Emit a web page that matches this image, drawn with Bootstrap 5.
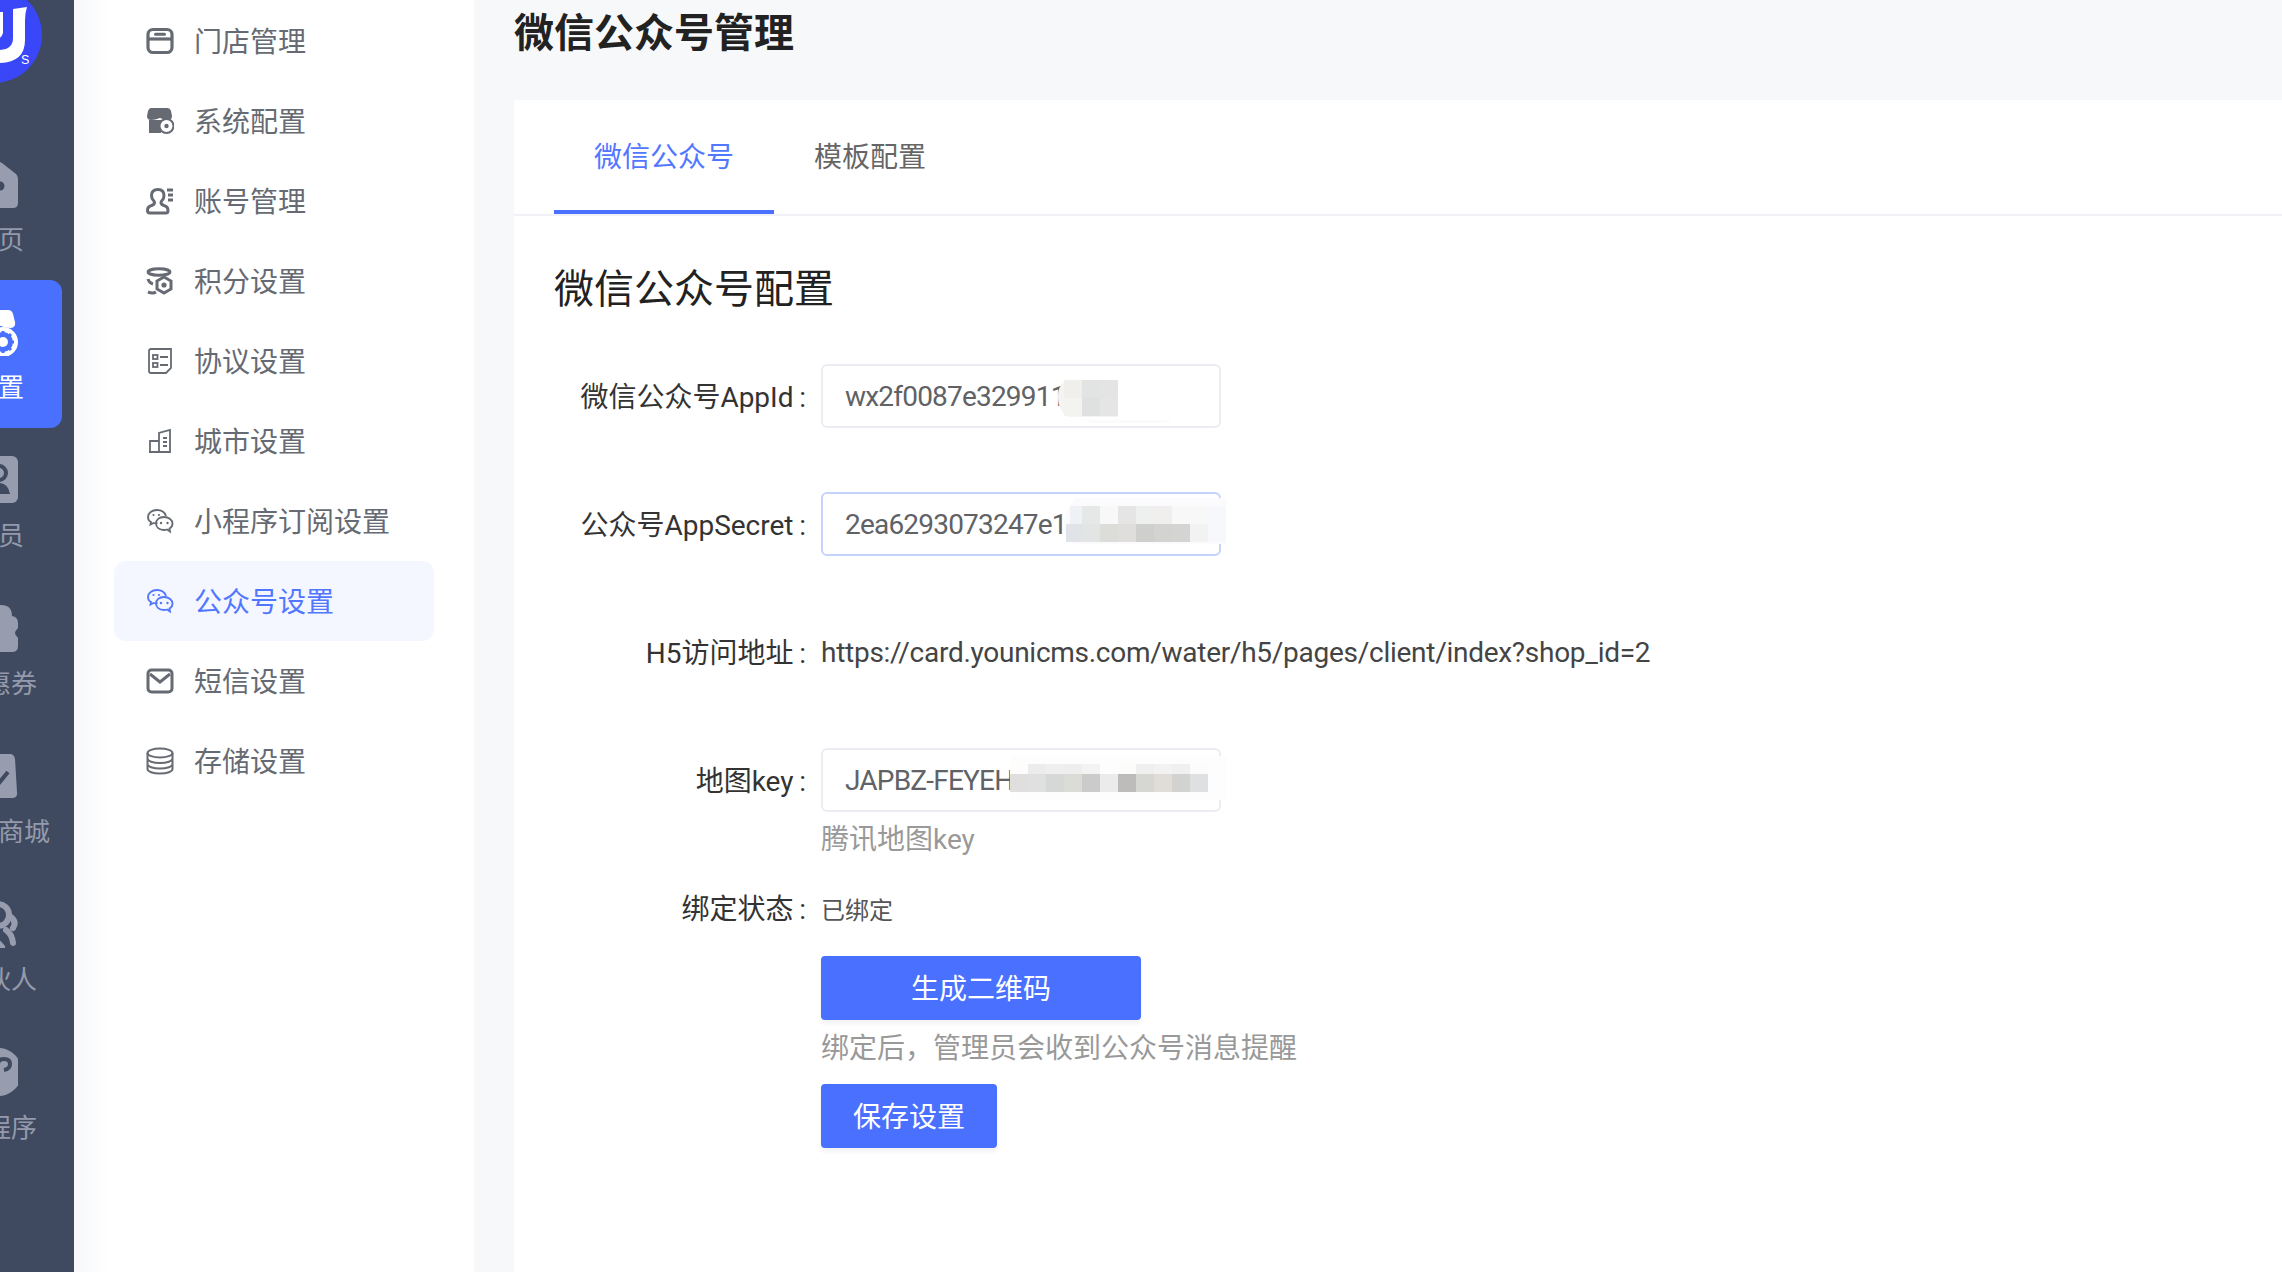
<!DOCTYPE html>
<html lang="zh-CN">
<head>
<meta charset="utf-8">
<title>微信公众号管理</title>
<link href="https://cdn.jsdelivr.net/npm/bootstrap@5.3.0/dist/css/bootstrap.min.css" rel="stylesheet">
<style>
html,body{height:1272px;overflow:hidden;}
body{font-family:Roboto,"Noto Sans CJK SC",sans-serif;background:#f7f8fa;color:#333;}
.shell{height:1272px;}
.rail{width:74px;flex:none;background:#3f4a60;overflow:hidden;}
.rail-logo{width:96px;height:96px;margin:-13px 0 49px -54px;flex:none;display:block;}
.rail-item{width:128px;height:148px;margin-left:-66px;padding-top:28px;flex:none;color:#949aab;border-radius:12px;}
.rail-item svg{display:block;width:40px;height:48px;margin:0 auto 16px;fill:#979dae;}
.rail-item span{display:block;font-size:26px;line-height:32px;text-align:center;white-space:nowrap;}
.rail-item.on{background:#4a70ff;color:#fff;}
.rail-item.on svg{fill:#fff;}
.side{width:400px;flex:none;padding-top:1px;background:linear-gradient(90deg,#f7f8fa 0,#fff 36px);}
.side-link{width:320px;height:80px;margin-left:40px;padding:0 0 0 32px;gap:20px;font-size:28px;color:#666a72;border-radius:12px;}
.side-link span{padding-top:3px;}
.side-link svg{width:28px;height:28px;flex:none;fill:none;stroke:currentColor;}
.side-link:hover{color:#666a72;}
.side-link.active,.side-link.active:hover{background:#f4f7ff;color:#5277ff;}
.main{flex:1 1 auto;min-width:0;padding:0 0 0 40px;}
.page-title{font-size:40px;line-height:67px;height:64px;margin:0 0 36px;font-weight:700;color:#222;}
.panel{height:1172px;background:#fff;}
.tabbar{height:116px;padding-left:40px;border-bottom:2px solid #f0f2f5;flex-wrap:nowrap;}
.tabbar .tab-link{height:114px;padding:0 40px;font-size:28px;line-height:115px;color:#666;border:0;border-bottom:4px solid transparent;border-radius:0;background:none;}
.tabbar .tab-link.active{color:#5277ff;border-bottom-color:#4a70ff;background:none;}
.pane{padding:44px 0 0 40px;}
.pane-title{font-size:40px;line-height:59px;height:56px;margin:0 0 48px;font-weight:400;color:#222;}
.frow{min-height:64px;margin-bottom:64px;}
.frow.tight{margin-bottom:0;}
.flabel{width:252px;height:64px;flex:none;margin:0 15px 0 0;text-align:right;font-size:28px;line-height:67px;color:#333;white-space:nowrap;}
.fvalue{height:64px;font-size:28px;line-height:66px;letter-spacing:-.27px;color:#444;white-space:nowrap;}
.fbox{position:relative;width:400px;height:64px;flex:none;}
.fbox .form-control{width:400px;height:64px;padding:0 22px;font-size:28px;letter-spacing:-.8px;color:#606266;border:2px solid #ebedf2;border-radius:6px;background:#fff;box-shadow:none;}
.fbox .form-control.focused{border-color:#c6d3f9;}
.mosaic{position:absolute;pointer-events:none;}
.m1{left:233px;top:12px;width:170px;height:50px;}
.m2{left:233px;top:6px;width:174px;height:52px;}
.m3{left:176px;top:8px;width:230px;height:44px;}
.hint{height:40px;margin-left:267px;font-size:28px;line-height:43px;color:#999;}
.hint-a{margin-top:6px;margin-bottom:30px;}
.hint-b{margin-top:7px;margin-bottom:17px;}
.frow.status-row{min-height:40px;height:40px;}
.status-row .flabel{height:40px;line-height:44px;}
.status-row .fvalue{height:40px;font-size:24px;line-height:46px;letter-spacing:0;color:#555;}
.act{display:block;height:64px;margin-left:267px;padding:4px 0 0;font-size:28px;line-height:60px;color:#fff;background:#4a70ff;border:0;border-radius:4px;box-shadow:0 4px 4px rgba(0,0,0,.05);}
.act:hover{background:#4a70ff;color:#fff;}
.act-wide{width:320px;margin-top:28px;}
.act-narrow{width:176px;}
</style>
</head>
<body>
<div class="shell d-flex">
  <nav class="rail d-flex flex-column">
    <svg class="rail-logo" viewBox="0 0 96 96">
      <circle cx="48" cy="48" r="48" fill="#3a47f8"/>
      <path d="M67 22L81 20Q79 26 79 33V53Q79 76 52 76H40V63H52Q67 63 67 51Z" fill="#fff"/>
      <path d="M40 25H57V46Q55 53 46 53H40Z" fill="#fff"/>
      <text x="75" y="77" font-size="12.500" fill="#fff" font-family="Liberation Sans, sans-serif">S</text>
    </svg>
    <div class="rail-item">
      <svg viewBox="0 0 40 48"><path d="M16 3q4-3 8 0L38 14q2 2 2 5v24q0 5-5 5H5q-5 0-5-5V19q0-3 2-5Z"/><circle cx="22" cy="26" r="4.500" fill="#3f4a60"/></svg>
      <span>首页</span>
    </div>
    <div class="rail-item on">
      <svg viewBox="0 0 40 48"><path d="M8 2H30Q34 2 35 6L37 14Q38 20 32 20Q27 20 20 17Q13 20 8 20Q2 20 3 14L5 6Q6 2 8 2Z"/><path d="M4 20H25V46H4Z"/><circle cx="25" cy="34" r="15"/><circle cx="25" cy="34" r="7.500" fill="none" stroke="#4a70ff" stroke-width="5"/><path d="M25 23v4M25 41v4M14 34h4M32 34h4M17 26l3 3M30 39l3 3M33 26l-3 3M20 39l-3 3" stroke="#4a70ff" stroke-width="3"/></svg>
      <span>设置</span>
    </div>
    <div class="rail-item">
      <svg viewBox="0 0 40 48"><rect width="40" height="47" rx="6"/><circle cx="21" cy="17" r="7" fill="none" stroke="#3f4a60" stroke-width="4"/><path d="M8 38q2-11 13-11 9 0 11 11Z" fill="#3f4a60"/></svg>
      <span>会员</span>
    </div>
    <div class="rail-item">
      <svg viewBox="0 0 40 48"><path d="M6 12q0-11 11-11h6q11 0 11 11q6 1 6 7v5q-3 3 -3 5t3 5v8q0 6-6 6H6q-6 0-6-6V19q0-6 6-7Z"/></svg>
      <span>优惠券</span>
    </div>
    <div class="rail-item">
      <svg viewBox="0 0 40 48"><path d="M10 6q0-4 4-4H32q4 0 5 5L39 40q1 6-5 6H6q-6 0-5-6L3 7Q4 3 10 6Z"/><path d="M14 26l7 5 9-11" fill="none" stroke="#3f4a60" stroke-width="4"/></svg>
      <span>积分商城</span>
    </div>
    <div class="rail-item">
      <svg viewBox="0 0 40 48"><circle cx="20" cy="15" r="11" fill="none" stroke="#979dae" stroke-width="6"/><path d="M33 17q6 5 2 11M8 32q8 6 16 15M28 30q6 4 7 13" fill="none" stroke="#979dae" stroke-width="6" stroke-linecap="round"/></svg>
      <span>合伙人</span>
    </div>
    <div class="rail-item">
      <svg viewBox="0 0 40 48"><circle cx="20" cy="24" r="24"/><path d="M20 32V16q0-5 6-5t6 5-6 6" fill="none" stroke="#3f4a60" stroke-width="4"/></svg>
      <span>小程序</span>
    </div>
  </nav>

  <aside class="side">
    <nav class="nav flex-column">
      <a class="nav-link side-link d-flex align-items-center" href="#">
        <svg viewBox="0 0 28 28"><rect x="2" y="2.500" width="24" height="23" rx="5" stroke-width="3.200"/><path d="M2 12H26" stroke-width="3.200"/><path d="M9.500 7.200H18.500" stroke-width="3" stroke-linecap="round"/></svg>
        <span>门店管理</span>
      </a>
      <a class="nav-link side-link d-flex align-items-center" href="#">
        <svg viewBox="0 0 28 28"><path d="M5 1H21Q24 1 25 4L26 9Q26 13 22 13Q18 13 14 11Q9 13 5 13Q1 13 1 9L2 4Q3 1 5 1Z" fill="currentColor" stroke="none"/><path d="M3 13H15V26H3Z" fill="currentColor" stroke="none"/><circle cx="20.500" cy="19" r="7" fill="#fff" stroke-width="2"/><circle cx="20.500" cy="19" r="2.200" fill="currentColor" stroke="none"/></svg>
        <span>系统配置</span>
      </a>
      <a class="nav-link side-link d-flex align-items-center" href="#">
        <svg viewBox="0 0 28 28"><path d="M12 2.500q6 0 6 6 0 3-2 5-1 1-1 2 0 2 3 3 4 1 4 5 0 2.500-2 2.500H4q-2.500 0-2.500-2.500 0-4 4-5 3-1 3-3 0-1-1-2-2-2-2-5 0-6 6.500-6Z" stroke-width="3"/><path d="M21 3H27M22 8H27M22 13H27" stroke-width="3"/></svg>
        <span>账号管理</span>
      </a>
      <a class="nav-link side-link d-flex align-items-center" href="#">
        <svg viewBox="0 0 28 28"><ellipse cx="13" cy="5" rx="11" ry="3.200" stroke-width="3"/><path d="M2 12q1 4 5 5M2 25q5 2 8 0" stroke-width="3"/><path d="M18 10l7 4v8l-7 4-7-4v-8Z" stroke-width="3"/><circle cx="18" cy="18" r="2.600" fill="currentColor" stroke="none"/></svg>
        <span>积分设置</span>
      </a>
      <a class="nav-link side-link d-flex align-items-center" href="#">
        <svg viewBox="0 0 28 28" stroke-width="1.800"><path d="M5 2H25V21L20 26H5Q3 26 3 24V4Q3 2 5 2Z"/><rect x="7" y="8" width="4.500" height="4"/><rect x="7" y="16" width="4.500" height="4"/><path d="M14 10H22M14 18H22"/></svg>
        <span>协议设置</span>
      </a>
      <a class="nav-link side-link d-flex align-items-center" href="#">
        <svg viewBox="0 0 28 28" stroke-width="1.800"><path d="M4 25V14H13M13 25V6L24 3V25H3M17 11H21M17 15H21M17 19H21"/></svg>
        <span>城市设置</span>
      </a>
      <a class="nav-link side-link d-flex align-items-center" href="#">
        <svg viewBox="0 0 28 28" stroke-width="1.800"><path d="M11 3C6 3 2 6 2 10c0 2 1 4 3 5l-.5 2.500L7.500 16q2 .5 4 .2"/><path d="M11 3c5 0 8 3 9 6"/><path d="M18 10c-5 0-8 3-8 6.500s3 6.500 8 6.500q1.500 0 3-.5l3 2-.5-3c2-1 3-3 3-5 0-3.500-3.500-6.500-8.500-6.500Z"/><circle cx="7.500" cy="8" r="1.100" fill="currentColor" stroke="none"/><circle cx="13" cy="8" r="1.100" fill="currentColor" stroke="none"/><circle cx="15" cy="16" r="1.200" fill="currentColor" stroke="none"/><circle cx="21.500" cy="16" r="1.200" fill="currentColor" stroke="none"/></svg>
        <span>小程序订阅设置</span>
      </a>
      <a class="nav-link side-link active d-flex align-items-center" href="#">
        <svg viewBox="0 0 28 28" stroke-width="1.800"><path d="M11 3C6 3 2 6 2 10c0 2 1 4 3 5l-.5 2.500L7.500 16q2 .5 4 .2"/><path d="M11 3c5 0 8 3 9 6"/><path d="M18 10c-5 0-8 3-8 6.500s3 6.500 8 6.500q1.500 0 3-.5l3 2-.5-3c2-1 3-3 3-5 0-3.500-3.500-6.500-8.500-6.500Z"/><circle cx="7.500" cy="8" r="1.100" fill="currentColor" stroke="none"/><circle cx="13" cy="8" r="1.100" fill="currentColor" stroke="none"/><circle cx="15" cy="16" r="1.200" fill="currentColor" stroke="none"/><circle cx="21.500" cy="16" r="1.200" fill="currentColor" stroke="none"/></svg>
        <span>公众号设置</span>
      </a>
      <a class="nav-link side-link d-flex align-items-center" href="#">
        <svg viewBox="0 0 28 28"><rect x="2" y="3" width="24" height="22" rx="3.500" stroke-width="3"/><path d="M4 7L14 15 24 7" stroke-width="3"/></svg>
        <span>短信设置</span>
      </a>
      <a class="nav-link side-link d-flex align-items-center" href="#">
        <svg viewBox="0 0 28 28" stroke-width="2"><ellipse cx="14" cy="6" rx="12.500" ry="4.500"/><path d="M1.500 6V22c0 2.500 5.500 4.500 12.500 4.500S26.500 24.500 26.500 22V6M1.500 11.500c0 2.500 5.500 4.500 12.500 4.500s12.500-2 12.500-4.500M1.500 17c0 2.500 5.500 4.500 12.500 4.500s12.500-2 12.500-4.500"/></svg>
        <span>存储设置</span>
      </a>
    </nav>
  </aside>

  <main class="main">
    <h1 class="page-title">微信公众号管理</h1>
    <section class="panel">
      <ul class="nav tabbar">
        <li class="nav-item"><a class="nav-link tab-link active" href="#">微信公众号</a></li>
        <li class="nav-item"><a class="nav-link tab-link" href="#">模板配置</a></li>
      </ul>
      <div class="pane">
        <h2 class="pane-title">微信公众号配置</h2>

        <div class="frow d-flex">
          <label class="flabel">微信公众号AppId&#8201;:</label>
          <div class="fbox">
            <input class="form-control" value="wx2f0087e329911">
            <svg class="mosaic m1" viewBox="0 0 170 50">
              <path d="M12 5Q3 10 4 22Q5 38 16 41H64V4H12Z" fill="#f4f4f4"/>
              <path d="M30 44H110Q125 44 110 47H40Z" fill="#fbfbfb"/>
              <rect x="10" y="4" width="18" height="18" fill="#f0efeb"/><rect x="28" y="4" width="18" height="18" fill="#e2e3e3"/><rect x="46" y="4" width="18" height="18" fill="#e4e4e4"/>
              <rect x="10" y="22" width="18" height="18" fill="#f3f4f0"/><rect x="28" y="22" width="18" height="18" fill="#dfe0e0"/><rect x="46" y="22" width="18" height="18" fill="#e5e5e5"/>
            </svg>
          </div>
        </div>

        <div class="frow d-flex">
          <label class="flabel">公众号AppSecret&#8201;:</label>
          <div class="fbox">
            <input class="form-control focused" value="2ea6293073247e1">
            <svg class="mosaic m2" viewBox="0 0 174 52">
              <path d="M22 0H172V46H22Q10 44 10 26Q12 8 22 0Z" fill="#fbfbfd"/>
              <rect x="16" y="8" width="12" height="18" fill="#eef2f6"/><rect x="28" y="8" width="18" height="18" fill="#e6e7e7"/><rect x="46" y="8" width="18" height="18" fill="#f8f8f8"/><rect x="64" y="8" width="18" height="18" fill="#e5e5e5"/><rect x="82" y="8" width="18" height="18" fill="#eeefef"/><rect x="100" y="8" width="18" height="18" fill="#f0efed"/><rect x="118" y="8" width="18" height="18" fill="#f8f8f8"/><rect x="136" y="8" width="18" height="18" fill="#f8f8f8"/><rect x="154" y="8" width="18" height="18" fill="#f7f8fc"/>
              <rect x="12" y="26" width="16" height="18" fill="#e0e4e8"/><rect x="28" y="26" width="18" height="18" fill="#e3e5e4"/><rect x="46" y="26" width="18" height="18" fill="#dcdcd8"/><rect x="64" y="26" width="18" height="18" fill="#dfdedc"/><rect x="82" y="26" width="18" height="18" fill="#cfcfcd"/><rect x="100" y="26" width="18" height="18" fill="#d3d3d2"/><rect x="118" y="26" width="18" height="18" fill="#d4d4d3"/><rect x="136" y="26" width="18" height="18" fill="#f2f2f2"/><rect x="154" y="26" width="18" height="18" fill="#f7f8fc"/>
            </svg>
          </div>
        </div>

        <div class="frow d-flex">
          <label class="flabel">H5访问地址&#8201;:</label>
          <div class="fvalue">https://card.younicms.com/water/h5/pages/client/index?shop_id=2</div>
        </div>

        <div class="frow tight d-flex">
          <label class="flabel">地图key&#8201;:</label>
          <div class="fbox">
            <input class="form-control" value="JAPBZ-FEYEH">
            <svg class="mosaic m3" viewBox="0 0 230 44">
              <rect x="14" y="0" width="216" height="44" fill="#fdfdfd"/>
              <rect x="13" y="8" width="18" height="10" fill="#fdfdfc"/><rect x="31" y="8" width="18" height="10" fill="#ececec"/><rect x="49" y="8" width="18" height="10" fill="#eeefee"/><rect x="67" y="8" width="18" height="10" fill="#eeeeee"/><rect x="85" y="8" width="18" height="10" fill="#f3f3f3"/><rect x="103" y="8" width="18" height="10" fill="#fcfdfc"/><rect x="121" y="8" width="18" height="10" fill="#fcfcfb"/><rect x="139" y="8" width="18" height="10" fill="#efefef"/><rect x="157" y="8" width="18" height="10" fill="#f2f2f2"/><rect x="175" y="8" width="18" height="10" fill="#f0f0f0"/><rect x="193" y="8" width="18" height="10" fill="#fbfbfb"/>
              <rect x="13" y="18" width="18" height="18" fill="#e0dfdd"/><rect x="31" y="18" width="18" height="18" fill="#e0e0e0"/><rect x="49" y="18" width="18" height="18" fill="#d6d8d7"/><rect x="67" y="18" width="18" height="18" fill="#dcdcd6"/><rect x="85" y="18" width="18" height="18" fill="#cbcbcb"/><rect x="103" y="18" width="18" height="18" fill="#ebebeb"/><rect x="121" y="18" width="18" height="18" fill="#bdbcba"/><rect x="139" y="18" width="18" height="18" fill="#d6d6d2"/><rect x="157" y="18" width="18" height="18" fill="#e0dcd8"/><rect x="175" y="18" width="18" height="18" fill="#d2d2d0"/><rect x="193" y="18" width="18" height="18" fill="#dfe0e2"/>
            </svg>
          </div>
        </div>
        <div class="hint hint-a">腾讯地图key</div>

        <div class="frow tight status-row d-flex">
          <label class="flabel">绑定状态&#8201;:</label>
          <div class="fvalue">已绑定</div>
        </div>

        <button type="button" class="btn act act-wide">生成二维码</button>
        <div class="hint hint-b">绑定后，管理员会收到公众号消息提醒</div>
        <button type="button" class="btn act act-narrow">保存设置</button>
      </div>
    </section>
  </main>
</div>
<script src="https://cdn.jsdelivr.net/npm/bootstrap@5.3.0/dist/js/bootstrap.bundle.min.js"></script>
</body>
</html>
